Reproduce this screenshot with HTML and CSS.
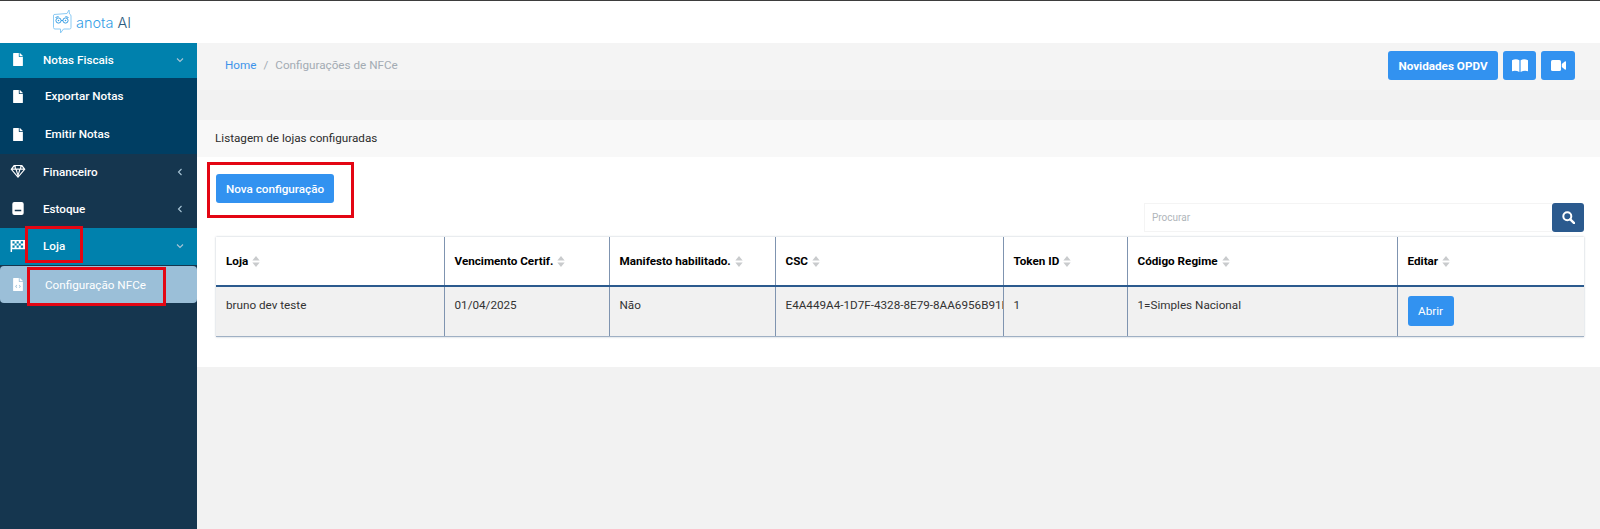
FILE: index.html
```html
<!DOCTYPE html>
<html lang="pt-BR">
<head>
<meta charset="utf-8">
<title>Configurações de NFCe</title>
<link rel="stylesheet" href="styles.css">
</head>
<body>
<header class="topbar">
  <div class="logo">
    <svg class="logo-mark" width="20" height="26" viewBox="0 0 20 26" fill="none" stroke="#8ccbf4" stroke-width="1">
      <path d="M2 5.500 L15 4.500 L17 1 L17.500 5 Q19 5.500 19 7 V18.500 Q19 20 17.500 20 H11.500 L8.500 24 V20 H3 Q1.500 20 1.500 18.500 V7 Q1.500 5.500 2 5.500Z"/>
      <circle cx="6.500" cy="11.500" r="2.600" stroke="#3a9fe4"/>
      <circle cx="13.500" cy="11.500" r="2.600" stroke="#3a9fe4"/>
      <path d="M9 11.500h2M3.500 8.500l3-1M16.500 8.500l-3-1" stroke="#3a9fe4"/>
      <circle cx="6.500" cy="11.500" r=".8" fill="#3a9fe4" stroke="none"/>
      <circle cx="13.500" cy="11.500" r=".8" fill="#3a9fe4" stroke="none"/>
    </svg>
    <span class="logo-text">anota <b>AI</b></span>
  </div>
</header>
<div class="shell">
  <nav class="sidebar">
    <a class="item item-first">
      <svg class="ico" viewBox="0 0 384 512"><use href="#i-file"/></svg>
      <span class="label">Notas Fiscais</span>
      <svg class="chev" viewBox="0 0 10 10"><path d="M2 3.500l3 3 3-3"/></svg>
    </a>
    <div class="sub">
      <a class="subitem">
        <svg class="ico" viewBox="0 0 384 512"><use href="#i-file"/></svg>
        <span class="sublabel">Exportar Notas</span>
      </a>
      <a class="subitem">
        <svg class="ico" viewBox="0 0 384 512"><use href="#i-file"/></svg>
        <span class="sublabel">Emitir Notas</span>
      </a>
    </div>
    <a class="item">
      <svg class="ico" viewBox="0 0 16 14"><path d="M3.500 0h9L16 4.500 8 14 0 4.500z M2 5.200l5.500 6.500-2.100-6.500z M14 5.200l-5.500 6.500 2.100-6.500z M6.800 5.200L8 9.500l1.200-4.300z M4 1.500L2.300 3.900h2.400z M12 1.500l1.700 2.400h-2.400z M5.500 1.200L5.800 3.900h4.400l.3-2.700z" fill-rule="evenodd"/></svg>
      <span class="label">Financeiro</span>
      <svg class="chev" viewBox="0 0 10 10"><path d="M6.500 2l-3 3 3 3"/></svg>
    </a>
    <a class="item">
      <svg class="ico" viewBox="0 0 14 16"><path fill-rule="evenodd" d="M2.500 0h9A2.500 2.500 0 0 1 14 2.500v11a2.500 2.500 0 0 1-2.500 2.500h-9A2.500 2.500 0 0 1 0 13.500v-11A2.500 2.500 0 0 1 2.500 0z M3 9.500v2h8v-2z"/></svg>
      <span class="label">Estoque</span>
      <svg class="chev" viewBox="0 0 10 10"><path d="M6.500 2l-3 3 3 3"/></svg>
    </a>
    <a class="item item-open">
      <svg class="ico" viewBox="0 0 16 14"><path fill-rule="evenodd" d="M0 1h15.500v10H1.600v3H0z M2 2.500v2.300h2.300V2.500z M6.500 2.500v2.300h2.300V2.500z M11 2.500v2.300h2.500V2.500z M4.300 4.800v2.300h2.200V4.800z M8.800 4.800v2.300H11V4.800z M2 7.100v2.300h2.300V7.100z M6.500 7.100v2.300h2.300V7.100z M11 7.100v2.300h2.500V7.100z"/></svg>
      <span class="label">Loja</span>
      <svg class="chev" viewBox="0 0 10 10"><path d="M2 3.500l3 3 3-3"/></svg>
    </a>
    <a class="subitem subitem-active">
      <svg class="ico" viewBox="0 0 384 512"><path fill-rule="evenodd" d="M224 136V0H24C10.700 0 0 10.700 0 24v464c0 13.300 10.700 24 24 24h336c13.300 0 24-10.700 24-24V160H248c-13.200 0-24-10.800-24-24zM160 370l-20 20-62-60 62-60 20 20-40 40zm64 0l40-40-40-40 20-20 62 60-62 60zM384 122v6H256V0h6c6.400 0 12.500 2.500 17 7l98 98c4.500 4.500 7 10.600 7 17z"/></svg>
      <span class="sublabel">Configuração NFCe</span>
    </a>
  </nav>
  <main class="content">
    <section class="crumbbar">
      <div class="crumbs">
        <a class="crumb-link">Home</a>
        <span class="crumb-sep">/</span>
        <span class="crumb-current">Configurações de NFCe</span>
      </div>
      <div class="actions">
        <button class="btn btn-strong">Novidades OPDV</button>
        <button class="btn btn-icon btn-book">
          <svg width="16" height="13" viewBox="0 0 16 13" fill="#fff"><path d="M0 1.200Q4-.6 7.400 1.200V13Q4 11.200 0 12.200z M16 1.200Q12-.6 8.600 1.200V13Q12 11.200 16 12.200z"/></svg>
        </button>
        <button class="btn btn-icon btn-video">
          <svg width="15" height="11" viewBox="0 0 15 11" fill="#fff"><rect width="10" height="11" rx="1.600"/><path d="M10.800 4l3-2.500q1.200-.5 1.200.6v6.800q0 1.100-1.200.6l-3-2.500z"/></svg>
        </button>
      </div>
    </section>
    <section class="card">
      <div class="card-head">Listagem de lojas configuradas</div>
      <div class="card-body">
        <button class="btn btn-new">Nova configuração</button>
        <div class="search">
          <input class="search-input" type="text" placeholder="Procurar">
          <button class="search-btn" aria-label="Procurar">
            <svg width="13" height="13" viewBox="0 0 13 13" fill="none" stroke="#fff" stroke-width="2"><circle cx="5.300" cy="5.300" r="4"/><path d="M8.300 8.300l3.800 3.800" stroke-linecap="round" stroke-width="2.400"/></svg>
          </button>
        </div>
        <table class="grid">
          <colgroup>
            <col class="c1"><col class="c2"><col class="c3"><col class="c4"><col class="c5"><col class="c6"><col class="c7">
          </colgroup>
          <thead>
            <tr>
              <th>Loja<svg class="sort" viewBox="0 0 8 12"><path d="M4 0l4 5H0zM4 12L0 7h8z"/></svg></th>
              <th>Vencimento Certif.<svg class="sort" viewBox="0 0 8 12"><path d="M4 0l4 5H0zM4 12L0 7h8z"/></svg></th>
              <th>Manifesto habilitado.<svg class="sort" viewBox="0 0 8 12"><path d="M4 0l4 5H0zM4 12L0 7h8z"/></svg></th>
              <th>CSC<svg class="sort" viewBox="0 0 8 12"><path d="M4 0l4 5H0zM4 12L0 7h8z"/></svg></th>
              <th>Token ID<svg class="sort" viewBox="0 0 8 12"><path d="M4 0l4 5H0zM4 12L0 7h8z"/></svg></th>
              <th>Código Regime<svg class="sort" viewBox="0 0 8 12"><path d="M4 0l4 5H0zM4 12L0 7h8z"/></svg></th>
              <th>Editar<svg class="sort" viewBox="0 0 8 12"><path d="M4 0l4 5H0zM4 12L0 7h8z"/></svg></th>
            </tr>
          </thead>
          <tbody>
            <tr>
              <td>bruno dev teste</td>
              <td>01/04/2025</td>
              <td>Não</td>
              <td class="clip">E4A449A4-1D7F-4328-8E79-8AA6956B91B2</td>
              <td>1</td>
              <td>1=Simples Nacional</td>
              <td><button class="btn btn-open">Abrir</button></td>
            </tr>
          </tbody>
        </table>
      </div>
    </section>
  </main>
</div>
<svg class="defs" width="0" height="0" aria-hidden="true"><defs><path id="i-file" d="M224 136V0H24C10.700 0 0 10.700 0 24v464c0 13.300 10.700 24 24 24h336c13.300 0 24-10.700 24-24V160H248c-13.200 0-24-10.800-24-24zM384 122v6H256V0h6c6.400 0 12.500 2.500 17 7l98 98c4.500 4.500 7 10.600 7 17z"/></defs></svg>
<div class="mark mark-loja"></div>
<div class="mark mark-config"></div>
<div class="mark mark-new"></div>
</body>
</html>
```
FILE: styles.css
```css
* { box-sizing: border-box; }
html, body { margin: 0; height: 100%; }
body {
  font-family: Roboto, "Liberation Sans", sans-serif;
  font-size: 11.700px;
  color: #2c2c2c;
  background: #f2f2f2;
  overflow: hidden;
  position: relative;
}
a { text-decoration: none; color: inherit; }
button { font-family: inherit; cursor: pointer; }
.defs { position: absolute; }

.topbar {
  height: 43px;
  background: #fff;
  border-top: 1px solid #3d3d3d;
  display: flex;
  align-items: center;
  padding-left: 52px;
}
.logo { display: flex; align-items: center; gap: 4px; }
.logo-mark { display: block; }
.logo-text {
  font-family: Inter, Roboto, sans-serif;
  font-weight: 300;
  font-size: 14.500px;
  color: #36a0e6;
}
.logo-text b { font-weight: 300; color: #2c5c80; }

.shell { display: flex; height: 486px; }

.sidebar {
  width: 197px;
  flex: none;
  background: #15364f;
  color: #fff;
  font-weight: 500;
}
.item {
  height: 37px;
  display: flex;
  align-items: center;
  padding: 0 12px 2px 10px;
}
.item-first { background: #0081ad; height: 35px; }
.item-open { background: #0081ad; }
.item .label { margin-left: 17px; flex: 1; }
.ico { width: 16px; height: 13px; fill: #fff; flex: none; display: block; }
.chev { width: 10px; height: 10px; fill: none; stroke: #a9c6d6; stroke-width: 1.100; }
.sub { background: #003e63; height: 76px; }
.subitem {
  height: 38px;
  display: flex;
  align-items: center;
  padding: 0 0 2px 10px;
}
.sublabel { margin-left: 19px; }
.subitem-active {
  height: 37px;
  margin-top: 1px;
  padding-bottom: 0;
  background: #9bbfd8;
  border-radius: 4px;
  font-weight: 400;
}

.content { flex: 1; min-width: 0; }
.crumbbar {
  height: 47px;
  background: #f4f4f4;
  display: flex;
  justify-content: space-between;
  padding: 8px 25px 0 28px;
}
.crumbs { display: flex; gap: 7px; padding-top: 7px; line-height: 15px; }
.crumb-link { color: #3d93ea; }
.crumb-sep { color: #a3abb3; }
.crumb-current { color: #a3abb3; }
.actions { display: flex; gap: 5px; align-items: flex-start; }

.btn {
  border: 0;
  background: #3292f0;
  color: #fff;
  border-radius: 3px;
  font-size: 11.700px;
  height: 29px;
}
.btn-strong { width: 110px; font-weight: 700; padding: 0; }
.btn-icon { width: 33px; padding: 0; display: flex; align-items: center; justify-content: center; }
.btn-video { width: 34px; }

.card { margin-top: 30px; background: #fff; }
.card-head {
  height: 37px;
  background: #f8f8f8;
  padding: 0 0 1px 18px;
  display: flex;
  align-items: center;
  color: #2c2c2c;
}
.card-body {
  height: 210px;
  padding: 17px 16px 0 19px;
}
.btn-new { display: block; width: 118px; padding: 0; font-weight: 500; }
.search { display: flex; margin: 0 0 5px 928px; height: 29px; }
.search-input {
  flex: 1;
  min-width: 0;
  border: 1px solid #f4f4f4;
  border-right: 0;
  padding: 0 7px;
  font-family: inherit;
  font-size: 10px;
  outline: 0;
}
.search-input::placeholder { color: #b0b5ba; opacity: 1; }
.search-btn {
  width: 32px;
  border: 0;
  padding: 0;
  background: #2b5a8e;
  border-radius: 3px;
  display: flex;
  align-items: center;
  justify-content: center;
}

.grid {
  width: 1368px;
  table-layout: fixed;
  border-collapse: collapse;
  background: #fff;
  box-shadow: 0 0 2px rgba(60, 80, 110, .35);
}
.c1 { width: 228px; }
.c2 { width: 165px; }
.c3 { width: 166px; }
.c4 { width: 228px; }
.c5 { width: 124px; }
.c6 { width: 270px; }
.c7 { width: 187px; }
.grid th, .grid td { padding: 0 10px; text-align: left; }
.grid th + th, .grid td + td { border-left: 1px solid #7f94b0; }
.grid th {
  height: 49px;
  border-bottom: 2px solid #2b5a8e;
  color: #000;
  font-weight: 700;
  white-space: nowrap;
}
.grid td {
  height: 50px;
  background: #f1f1f1;
  vertical-align: top;
  padding-top: 11px;
  border-bottom: 1px solid #9fb0c4;
  color: #333;
}
.grid td.clip { overflow: hidden; white-space: nowrap; padding-right: 0; }
.sort { width: 8px; height: 11px; fill: #c9cbcd; margin-left: 4px; vertical-align: -2px; }
.grid td .btn-open { width: 46px; height: 30px; display: block; padding: 0; }
.grid td:last-child { padding-top: 9px; }

.mark { position: absolute; border: 3px solid #e30613; pointer-events: none; }
.mark-loja { left: 25px; top: 226px; width: 58px; height: 37px; }
.mark-config { left: 27px; top: 267px; width: 139px; height: 39px; }
.mark-new { left: 207px; top: 162px; width: 147px; height: 56px; }
```
